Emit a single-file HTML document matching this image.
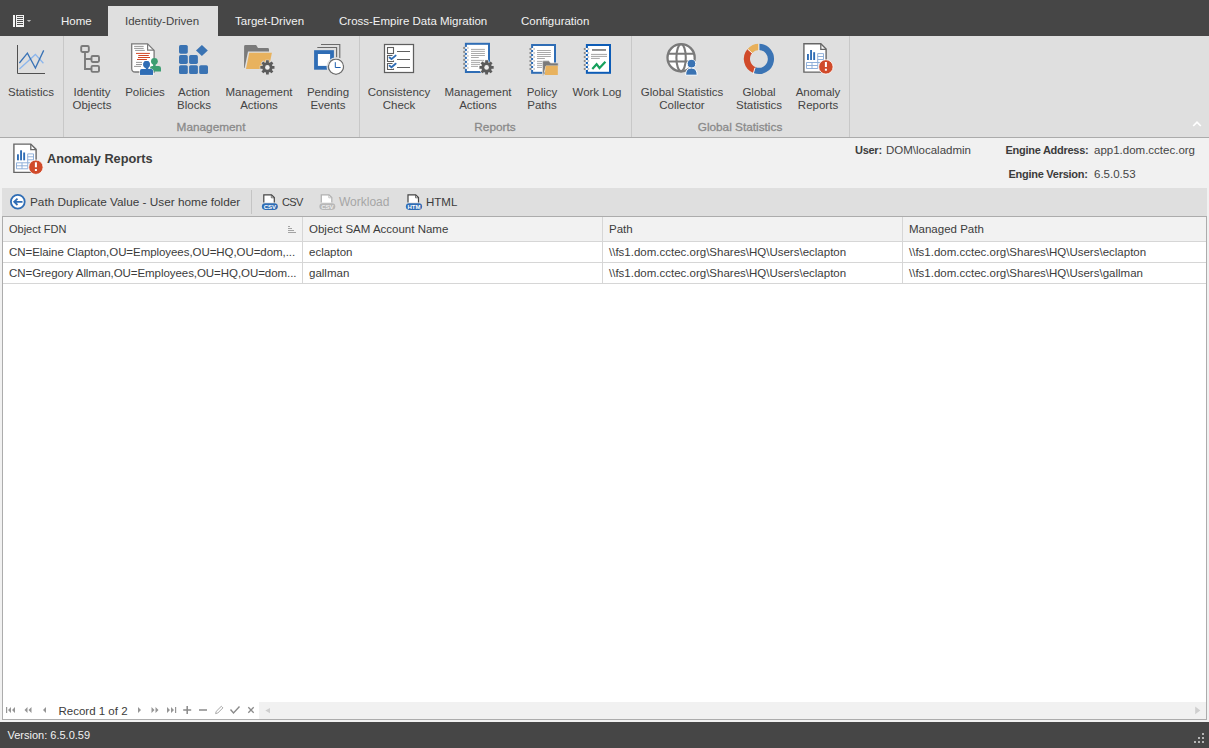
<!DOCTYPE html>
<html><head><meta charset="utf-8">
<style>
*{margin:0;padding:0;box-sizing:border-box}
html,body{width:1209px;height:748px;overflow:hidden;background:#f1f1f1;font-family:"Liberation Sans",sans-serif;font-size:11.5px;color:#3c3c3c}
.a{position:absolute}
.t{position:absolute;white-space:pre;line-height:13px}
#top{left:0;top:0;width:1209px;height:36px;background:#464646}
.tab{color:#f2f2f2;top:14.5px}
#acttab{left:108px;top:6px;width:110px;height:30px;background:#dfdfdf}
#ribbon{left:0;top:36px;width:1209px;height:101px;background:#dfdfdf}
#rbb{left:0;top:137px;width:1209px;height:1px;background:#ababab}
.b{font-weight:bold;font-size:11px;letter-spacing:-0.27px}
.sep{top:36px;width:1px;height:101px;background:#c8c8c8}
.lbl{top:85.5px;text-align:center;color:#444}
.glbl{top:120.5px;color:#8a8a8a;text-align:center;font-size:11.8px;-webkit-text-stroke:0.3px #8a8a8a}
svg{position:absolute;overflow:visible}
#icons{pointer-events:none}
#status{left:0;top:722px;width:1209px;height:26px;background:#464646}
</style></head><body>
<!-- top dark bar -->
<div class="a" id="top"></div>
<div class="a" id="acttab"></div>
<div class="t tab" style="left:61px">Home</div>
<div class="t" style="left:125px;top:14.5px;color:#444">Identity-Driven</div>
<div class="t tab" style="left:235px">Target-Driven</div>
<div class="t tab" style="left:339px">Cross-Empire Data Migration</div>
<div class="t tab" style="left:521px">Configuration</div>

<!-- ribbon -->
<div class="a" id="ribbon"></div>
<div class="a" id="rbb"></div>
<div class="a sep" style="left:63px"></div>
<div class="a sep" style="left:359px"></div>
<div class="a sep" style="left:631px"></div>
<div class="a sep" style="left:849px"></div>

<div class="t lbl" style="left:-19px;width:100px">Statistics</div>
<div class="t lbl" style="left:42px;width:100px">Identity
Objects</div>
<div class="t lbl" style="left:95px;width:100px">Policies</div>
<div class="t lbl" style="left:144px;width:100px">Action
Blocks</div>
<div class="t lbl" style="left:209px;width:100px">Management
Actions</div>
<div class="t lbl" style="left:278px;width:100px">Pending
Events</div>
<div class="t lbl" style="left:349px;width:100px">Consistency
Check</div>
<div class="t lbl" style="left:428px;width:100px">Management
Actions</div>
<div class="t lbl" style="left:492px;width:100px">Policy
Paths</div>
<div class="t lbl" style="left:547px;width:100px">Work Log</div>
<div class="t lbl" style="left:632px;width:100px">Global Statistics
Collector</div>
<div class="t lbl" style="left:709px;width:100px">Global
Statistics</div>
<div class="t lbl" style="left:768px;width:100px">Anomaly
Reports</div>

<div class="t glbl" style="left:161px;width:100px">Management</div>
<div class="t glbl" style="left:445px;width:100px">Reports</div>
<div class="t glbl" style="left:690px;width:100px">Global Statistics</div>


<!-- content header -->
<div class="t" style="left:47px;top:151px;font-size:12.75px;font-weight:bold;line-height:16px">Anomaly Reports</div>
<div class="t b" style="left:855px;top:144px">User:</div>
<div class="t" style="left:886px;top:143.5px;color:#444">DOM\localadmin</div>
<div class="t b" style="left:1005.5px;top:144px">Engine Address:</div>
<div class="t" style="left:1094px;top:143.5px;color:#444">app1.dom.cctec.org</div>
<div class="t b" style="left:1008.5px;top:168px">Engine Version:</div>
<div class="t" style="left:1094px;top:167.5px;color:#444">6.5.0.53</div>

<!-- toolbar -->
<div class="a" style="left:2px;top:188px;width:1205px;height:28px;background:#dfdfdf"></div>
<div class="a" style="left:251px;top:190px;width:1px;height:24px;background:#c4c4c4"></div>
<div class="t" style="left:30px;top:195.5px;font-size:11.8px">Path Duplicate Value - User home folder</div>
<div class="t" style="left:282px;top:195.5px;font-size:11px;letter-spacing:-0.6px">CSV</div>
<div class="t" style="left:339px;top:195.5px;color:#a6a6a6;font-size:12px">Workload</div>
<div class="t" style="left:426px;top:195.5px">HTML</div>

<!-- grid -->
<div class="a" style="left:2px;top:216px;width:1205px;height:504px;background:#fff;border:1px solid #acacac"></div>
<div class="a" style="left:3px;top:217px;width:1203px;height:24px;background:#f2f2f2"></div>
<div class="a" style="left:3px;top:241px;width:1203px;height:1px;background:#d6d6d6"></div>
<div class="a" style="left:3px;top:262px;width:1203px;height:1px;background:#d6d6d6"></div>
<div class="a" style="left:3px;top:283px;width:1203px;height:1px;background:#d6d6d6"></div>
<div class="a" style="left:302px;top:217px;width:1px;height:66px;background:#d6d6d6"></div>
<div class="a" style="left:602px;top:217px;width:1px;height:66px;background:#d6d6d6"></div>
<div class="a" style="left:902px;top:217px;width:1px;height:66px;background:#d6d6d6"></div>
<div class="t" style="left:9px;top:222.5px;font-size:11px">Object FDN</div>
<div class="t" style="left:309px;top:222.5px">Object SAM Account Name</div>
<div class="t" style="left:609px;top:222.5px">Path</div>
<div class="t" style="left:909px;top:222.5px">Managed Path</div>
<div class="t" style="left:9px;top:245.5px;letter-spacing:-0.06px">CN=Elaine Clapton,OU=Employees,OU=HQ,OU=dom,...</div>
<div class="t" style="left:309px;top:245.5px">eclapton</div>
<div class="t" style="left:609px;top:245.5px">\\fs1.dom.cctec.org\Shares\HQ\Users\eclapton</div>
<div class="t" style="left:909px;top:245.5px">\\fs1.dom.cctec.org\Shares\HQ\Users\eclapton</div>
<div class="t" style="left:9px;top:266.5px;letter-spacing:-0.06px">CN=Gregory Allman,OU=Employees,OU=HQ,OU=dom...</div>
<div class="t" style="left:309px;top:266.5px">gallman</div>
<div class="t" style="left:609px;top:266.5px">\\fs1.dom.cctec.org\Shares\HQ\Users\eclapton</div>
<div class="t" style="left:909px;top:266.5px">\\fs1.dom.cctec.org\Shares\HQ\Users\gallman</div>
<!-- nav -->
<div class="t" style="left:58.5px;top:704.5px">Record 1 of 2</div>
<div class="a" style="left:259px;top:701.5px;width:947px;height:17px;background:#f1f1f1"></div>

<!-- status -->
<div class="a" id="status"></div>
<div class="t" style="left:7.5px;top:728.5px;color:#f2f2f2;font-size:11px">Version: 6.5.0.59</div>
<svg id="icons" style="left:0;top:0" width="1209" height="748" viewBox="0 0 1209 748">
<defs>
<g id="gear">
 <path d="M-1.44,-5.00 L-1.36,-7.07 L1.36,-7.07 L1.44,-5.00 L2.52,-4.55 L4.04,-5.96 L5.96,-4.04 L4.55,-2.52 L5.00,-1.44 L7.07,-1.36 L7.07,1.36 L5.00,1.44 L4.55,2.52 L5.96,4.04 L4.04,5.96 L2.52,4.55 L1.44,5.00 L1.36,7.07 L-1.36,7.07 L-1.44,5.00 L-2.52,4.55 L-4.04,5.96 L-5.96,4.04 L-4.55,2.52 L-5.00,1.44 L-7.07,1.36 L-7.07,-1.36 L-5.00,-1.44 L-4.55,-2.52 L-5.96,-4.04 L-4.04,-5.96 L-2.52,-4.55 Z" fill="#5b5b5b" stroke="#dfdfdf" stroke-width="1.2" paint-order="stroke"/>
 <circle r="2.3" fill="#eeeeee"/>
</g>
<g id="spiral">
 <rect x="0" y="0" width="2" height="2" fill="#8a8a8a"/>
 <rect x="2" y="0" width="2" height="2" fill="#fff"/>
 <rect x="4" y="0" width="1.4" height="2" fill="#c8c8c8"/>
</g>
<g id="anomaly">
 <path d="M803.9,43.8 H820.8 L826.1,49.1 V72.1 H803.9 Z" fill="#fff" stroke="#666" stroke-width="1.4"/>
 <path d="M820.8,43.8 V49.4 H826.1" fill="none" stroke="#666" stroke-width="1.3"/>
 <rect x="807" y="54" width="1.9" height="6" fill="#2f6db5"/>
 <rect x="810.1" y="50" width="1.9" height="10" fill="#2f6db5"/>
 <rect x="813.2" y="52.2" width="1.9" height="7.8" fill="#2f6db5"/>
 <path d="M806.5,62.5 H817.8 V68.5 H806.5 Z M806.5,65.5 H817.8 M812,62.5 V68.5 M817.7,53.6 H823.5 V62.5 H817.7 Z M817.7,56.5 H823.5 M817.7,59.5 H823.5" fill="none" stroke="#86a8d6" stroke-width="0.9"/>
 <circle cx="825.9" cy="66.9" r="7.2" fill="#d04a2a" stroke="#fff" stroke-width="0.8"/>
 <rect x="824.9" y="62" width="2" height="5" fill="#fff"/>
 <rect x="824.9" y="68.7" width="2" height="2" fill="#fff"/>
</g>
</defs>

<!-- app menu icon -->
<rect x="13" y="15" width="2" height="12" fill="#f4f4f4"/>
<rect x="16" y="15" width="8" height="12" fill="#f4f4f4"/>
<path d="M17,16.5 H23 M17,18.5 H23 M17,20.5 H23 M17,22.5 H23 M17,24.5 H23" stroke="#505050" stroke-width="1"/>
<path d="M26.8,20 H31.2 L29,22 Z" fill="#bdbdbd"/>
<!-- collapse chevron -->
<path d="M1193.2,126 L1197,122.2 L1200.8,126" fill="none" stroke="#fff" stroke-width="1.7"/>

<!-- 1 Statistics -->
<path d="M17.5,45 V73.5 H45" fill="none" stroke="#505050" stroke-width="1"/>
<polyline points="19.4,69 35.4,54.4 43.4,63.3" fill="none" stroke="#8cb6ec" stroke-width="1.3"/>
<polyline points="19.4,63 27.4,53.1 35.4,68.1 43.7,50.4" fill="none" stroke="#3a73b6" stroke-width="1.3"/>

<!-- 2 Identity Objects -->
<g fill="none" stroke="#7a7a7a" stroke-width="1.9">
 <rect x="81.2" y="46" width="7.6" height="6" rx="1.2"/>
 <rect x="91.5" y="56" width="7.5" height="6" rx="1.2"/>
 <rect x="91.5" y="65.9" width="7.5" height="6" rx="1.2"/>
 <path d="M85,52 V69 H91 M85,59 H91"/>
</g>

<!-- 3 Policies -->
<path d="M131.7,43.9 H147.6 L154.1,50.4 V72 H135.2 Q131.7,72 131.7,68.5 Z" fill="#fff" stroke="#7a7a7a" stroke-width="1.3"/>
<path d="M147.6,43.9 V50.2 H154.1" fill="none" stroke="#7a7a7a" stroke-width="1.2"/>
<g stroke="#8c8c8c" stroke-width="0.9">
 <path d="M134.1,46.4 H143.7 M134.1,48.4 H143.7 M135.1,50.4 H144.8 M136,62.4 H142 M136,64.5 H142 M134,66.4 H141"/>
</g>
<g stroke="#d24726" stroke-width="1">
 <path d="M136,53.4 H149.9 M138.3,55.5 H148.8 M138,57.5 H150 M137,59.5 H146.9"/>
</g>
<g fill="#3d9e72">
 <ellipse cx="154.4" cy="61.3" rx="3.4" ry="3.4"/>
 <rect x="153.2" y="63.5" width="2.4" height="3"/>
 <path d="M149.9,71.5 V68.3 Q149.9,65.9 152.4,65.9 H158.6 Q161,65.9 161,68.3 V71.5 Z"/>
</g>
<g fill="#2f6db5" stroke="#fff" stroke-width="1.2" paint-order="stroke">
 <ellipse cx="146.55" cy="64.5" rx="3.25" ry="3.4"/>
 <path d="M140,74.7 V71.5 Q140,69.1 142.5,69.1 H150.5 Q153,69.1 153,71.5 V74.7 Z"/>
</g>
<g fill="#2f6db5">
 <ellipse cx="146.55" cy="64.5" rx="3.25" ry="3.4"/>
 <rect x="145.8" y="67" width="2.5" height="3"/>
 <path d="M140,74.7 V71.5 Q140,69.1 142.5,69.1 H150.5 Q153,69.1 153,71.5 V74.7 Z"/>
</g>

<!-- 4 Action Blocks -->
<g fill="#3a73b3">
 <rect x="179" y="44.9" width="8.8" height="8.8" rx="1.6"/>
 <rect x="179" y="55.1" width="8.8" height="8.8" rx="1.6"/>
 <rect x="189.1" y="55.1" width="8.8" height="8.8" rx="1.6"/>
 <rect x="179" y="65.2" width="8.8" height="8.8" rx="1.6"/>
 <rect x="189.1" y="65.2" width="8.8" height="8.8" rx="1.6"/>
 <rect x="199.2" y="65.2" width="8.8" height="8.8" rx="1.6"/>
 <path d="M201.9,44.9 L207.8,50.4 L201.9,55.9 L196,50.4 Z"/>
</g>

<!-- 5 Management Actions folder+gear -->
<path d="M244.1,68 V46.5 Q244.1,45.1 245.5,45.1 H256.1 L258,48 H267.6 Q269,48 269,49.4 V51.5 H248 L244.6,68 Z" fill="#7a7a7a"/>
<path d="M249.2,52.8 H271.9 L268.6,68.9 H246 Z" fill="#e8b25e"/>
<use href="#gear" x="267.4" y="67.4"/>

<!-- 6 Pending Events -->
<path d="M321,44.5 H339.8 V58.2 M317.3,47.5 H336.6 V57.6" fill="none" stroke="#6a6a6a" stroke-width="1.1"/>
<rect x="316" y="52.1" width="16" height="15.7" fill="#fff" stroke="#2f6db5" stroke-width="3.8"/>
<circle cx="336" cy="66.7" r="7.6" fill="#fff" stroke="#6e6e6e" stroke-width="1.3"/>
<circle cx="336" cy="66.7" r="8.9" fill="none" stroke="#dfdfdf" stroke-width="1.2"/>
<path d="M335.3,62.2 V67.5 H340.6" fill="none" stroke="#1e5fae" stroke-width="1"/>

<!-- 7 Consistency Check -->
<rect x="384.5" y="44.5" width="29" height="28" fill="#fff" stroke="#5f5f5f" stroke-width="1.25"/>
<g fill="none" stroke="#5f5f5f" stroke-width="1.1">
 <rect x="387.5" y="47.5" width="6" height="6"/>
 <path d="M392.5,55.5 H387.5 V61.5 H393.5 V60.5"/>
 <path d="M392.5,63.5 H387.5 V69.5 H393.5 V68.5"/>
 <path d="M397,51.5 H410 M397,59.5 H410 M397,67.5 H410"/>
</g>
<g fill="none" stroke="#2f6db5" stroke-width="1.9" stroke-linecap="round">
 <polyline points="389.6,57.6 391.5,59.1 395.6,55.6"/>
 <polyline points="389.6,65.7 391.5,67.2 395.6,63.7"/>
</g>

<!-- 8 Management Actions notebook+gear -->
<rect x="465.9" y="43.8" width="23.1" height="28.2" fill="#fff" stroke="#2f6db5" stroke-width="2"/>
<g stroke="#a0a0a0" stroke-width="0.9">
 <path d="M471,49.4 H484.9 M471,51.4 H484.9 M471,53.5 H484.9 M471,55.5 H484.9 M471,57.5 H478.8 M471,60.4 H484 M471,62.4 H480 M471,64.4 H480 M471,66.4 H478"/>
</g>
<use href="#spiral" x="463.2" y="46.9"/><use href="#spiral" x="463.2" y="50.9"/><use href="#spiral" x="463.2" y="54.9"/><use href="#spiral" x="463.2" y="58.9"/><use href="#spiral" x="463.2" y="62.9"/><use href="#spiral" x="463.2" y="66.9"/>
<use href="#gear" x="486.6" y="67.4"/>

<!-- 9 Policy Paths -->
<rect x="532.1" y="45" width="22.9" height="27.8" fill="#fff" stroke="#2f6db5" stroke-width="2"/>
<g stroke="#a0a0a0" stroke-width="0.9">
 <path d="M537,50.5 H550.9 M537,52.5 H550.9 M537,54.5 H550.9 M537,56.5 H550.9 M537,58.5 H544.9 M537,61.4 H543 M537,63.4 H543 M537,65.4 H543 M537,67.4 H542"/>
</g>
<use href="#spiral" x="529.5" y="48"/><use href="#spiral" x="529.5" y="52"/><use href="#spiral" x="529.5" y="56"/><use href="#spiral" x="529.5" y="60"/><use href="#spiral" x="529.5" y="64"/><use href="#spiral" x="529.5" y="68"/>
<path d="M542.6,75.4 V61.8 Q542.6,60.8 543.6,60.8 H549 L550.5,62.9 H558.3 V66 H546 L543.5,75.4 Z" fill="#7a7a7a" stroke="#dfdfdf" stroke-width="0.8"/>
<path d="M545.8,65.8 H557.8 V74.9 H544.6 Z" fill="#e8b25e"/>

<!-- 10 Work Log -->
<rect x="586.9" y="45" width="23.1" height="27.8" fill="#fff" stroke="#0d5cb6" stroke-width="2"/>
<rect x="592" y="49" width="14" height="1.9" fill="#8a8a8a"/>
<path d="M591,54.4 H607 M591,56.4 H607 M591,58.4 H599.8" stroke="#9a9a9a" stroke-width="0.9"/>
<polyline points="592.3,69 596.6,64.2 599.5,68 605.4,61.8" fill="none" stroke="#16a05c" stroke-width="2.2"/>
<use href="#spiral" x="583.8" y="48"/><use href="#spiral" x="583.8" y="52"/><use href="#spiral" x="583.8" y="56"/><use href="#spiral" x="583.8" y="60"/><use href="#spiral" x="583.8" y="64"/><use href="#spiral" x="583.8" y="68"/>

<!-- 11 Global Statistics Collector -->
<circle cx="681.1" cy="57.8" r="13.6" fill="#fff" stroke="#7a7a7a" stroke-width="2.3"/>
<ellipse cx="681.1" cy="57.8" rx="4.7" ry="13.6" fill="none" stroke="#7a7a7a" stroke-width="2.1"/>
<path d="M668,53.8 H694 M668,61.5 H694" stroke="#7a7a7a" stroke-width="2"/>
<circle cx="691.5" cy="63.7" r="4.3" fill="#3a73b3" stroke="#fff" stroke-width="1"/>
<path d="M685.6,75.2 Q685.6,68 691.4,68 Q697.2,68 697.2,75.2 Z" fill="#3a73b3" stroke="#fff" stroke-width="1"/>
<circle cx="691.5" cy="63.7" r="3.6" fill="#3a73b3"/>

<!-- 12 Global Statistics donut -->
<g fill="none" stroke-width="6.2">
 <path d="M758.9,46.9 A12,12 0 1 1 754.6,70.1" stroke="#3b74b4"/>
 <path d="M754.6,70.1 A12,12 0 0 1 749.9,51" stroke="#d04a2a"/>
 <path d="M749.9,51 A12,12 0 0 1 758.9,46.9" stroke="#e8b05a"/>
</g>
<path d="M758.9,43.5 V50.5 M754.9,67.8 L753.2,74 M752.5,53.5 L747.5,49" stroke="#fff" stroke-width="0.9"/>

<!-- 13 Anomaly Reports -->
<use href="#anomaly"/>
<use href="#anomaly" x="-790" y="100.3"/>

<!-- toolbar back icon -->
<circle cx="17.8" cy="201.8" r="6.9" fill="#fff" stroke="#2f6db5" stroke-width="1.8"/>
<path d="M22.5,201.8 H14.5 M17.5,198.6 L14.2,201.8 L17.5,205" fill="none" stroke="#2f6db5" stroke-width="1.8"/>

<!-- CSV icon -->
<g id="csvi">
<path d="M263.8,202.5 V194.8 H271.5 L274.3,197.6 V202.5" fill="#fff" stroke="#444" stroke-width="1.2"/><path d="M271.3,195 V197.8 H274.1" fill="none" stroke="#555" stroke-width="0.8"/>
<rect x="261.9" y="203.3" width="15.9" height="6.6" rx="3.3" fill="#2f6db5"/>
<text x="269.85" y="209.1" font-family="Liberation Sans" font-size="6" font-weight="bold" fill="#fff" text-anchor="middle">CSV</text>
</g>
<g opacity="1">
<path d="M321.3,202.5 V194.8 H329 L331.8,197.6 V202.5" fill="#fff" stroke="#b0b0b0" stroke-width="1.2"/><path d="M328.8,195 V197.8 H331.6" fill="none" stroke="#b8b8b8" stroke-width="0.8"/>
<rect x="319.4" y="203.3" width="15.9" height="6.6" rx="3.3" fill="#b8b8b8"/>
<text x="327.35" y="209.1" font-family="Liberation Sans" font-size="6" font-weight="bold" fill="#eee" text-anchor="middle">CSV</text>
</g>
<g>
<path d="M408,202.5 V194.8 H415.7 L418.5,197.6 V202.5" fill="#fff" stroke="#444" stroke-width="1.2"/><path d="M415.5,195 V197.8 H418.3" fill="none" stroke="#555" stroke-width="0.8"/>
<rect x="405.9" y="203.3" width="16.2" height="6.6" rx="3.3" fill="#2f6db5"/>
<text x="414" y="209.1" font-family="Liberation Sans" font-size="6" font-weight="bold" fill="#fff" text-anchor="middle">HTM</text>
</g>

<!-- sort glyph -->
<path d="M288,226.5 H290 M288,228.5 H292 M288,230.5 H294 M288,232.5 H296" stroke="#9a9a9a" stroke-width="0.9"/>

<!-- nav buttons -->
<g fill="#959595">
 <rect x="6" y="707" width="1.2" height="6"/>
 <path d="M11,707 L8,710 L11,713 Z M15,707 L12,710 L15,713 Z"/>
 <path d="M27.5,707 L24.5,710 L27.5,713 Z M31.5,707 L28.5,710 L31.5,713 Z"/>
 <path d="M46,707 L43,710 L46,713 Z"/>
 <path d="M138,707 L141,710 L138,713 Z"/>
 <path d="M151.5,707 L154.5,710 L151.5,713 Z M155.5,707 L158.5,710 L155.5,713 Z"/>
 <path d="M167,707 L170,710 L167,713 Z M171,707 L174,710 L171,713 Z"/>
 <rect x="175" y="707" width="1.2" height="6"/>
</g>
<path d="M183.2,710 H191.2 M187.2,706 V714" stroke="#8a8a8a" stroke-width="1.5"/>
<path d="M199,710 H207" stroke="#8a8a8a" stroke-width="1.5"/>
<path d="M215.6,713.6 L216.2,711.4 L221.3,706.3 L222.9,707.9 L217.8,713 Z" fill="#fff" stroke="#a8a8a8" stroke-width="1"/>
<polyline points="230.5,709.5 233.5,713 239.5,706.5" fill="none" stroke="#8a8a8a" stroke-width="1.4"/>
<path d="M248.3,707.3 L253.7,712.7 M253.7,707.3 L248.3,712.7" stroke="#8a8a8a" stroke-width="1.3"/>
<path d="M270,708 L265.3,710.6 L270,713.2 Z" fill="#cfcfcf"/>
<path d="M1195.2,706.6 L1200.3,710.5 L1195.2,714.3 Z" fill="#cfcfcf"/>

<!-- resize grip -->
<g fill="#b4b4b4">
 <rect x="1202" y="733" width="2" height="2"/>
 <rect x="1198" y="737" width="2" height="2"/><rect x="1202" y="737" width="2" height="2"/>
 <rect x="1194" y="741" width="2" height="2"/><rect x="1198" y="741" width="2" height="2"/><rect x="1202" y="741" width="2" height="2"/>
</g>
</svg>

</body></html>
